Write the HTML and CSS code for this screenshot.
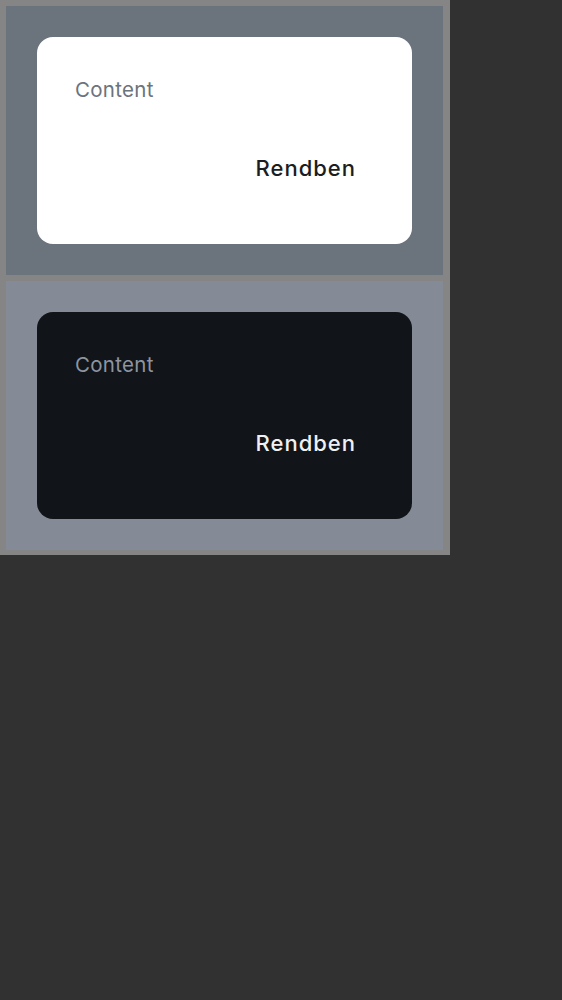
FILE: index.html
```html
<!DOCTYPE html>
<html>
<head>
<meta charset="utf-8">
<link rel="stylesheet" href="styles.css">
</head>
<body>
<div class="frame">
  <div class="panel panel-light">
    <div class="card card-light">
      <div class="content">Content</div>
      <div class="actions"><span class="btn">Rendben</span></div>
    </div>
  </div>
  <div class="panel panel-dark">
    <div class="card card-dark">
      <div class="content">Content</div>
      <div class="actions"><span class="btn">Rendben</span></div>
    </div>
  </div>
</div>
</body>
</html>
```

FILE: styles.css
```css
html, body {
  margin: 0;
  padding: 0;
  background: #313131;
  font-family: Inter, Roboto, "Noto Sans", sans-serif;
}
.frame {
  width: 437px;
  background: #858585;
  padding: 6px 7px 5px 6px;
  display: flex;
  flex-direction: column;
  gap: 6px;
}
.panel {
  height: 269px;
  box-sizing: border-box;
  padding: 31px;
}
.panel-light { background: #6b737d; }
.panel-dark { background: #858b96; }
.card {
  height: 207px;
  box-sizing: border-box;
  border-radius: 16px;
  padding: 0 56px 0 38px;
  display: flex;
  flex-direction: column;
}
.card-light { background: #ffffff; }
.card-dark { background: #111418; }
.content {
  font-size: 20.5px;
  line-height: 28px;
  margin-top: 39px;
  letter-spacing: 0.3px;
}
.card-light .content { color: #6b737d; }
.card-dark .content { color: #8e95a0; }
.actions {
  display: flex;
  justify-content: flex-end;
  margin-top: 50px;
}
.btn {
  font-size: 22px;
  font-weight: 500;
  line-height: 28px;
  letter-spacing: 1px;
}
.card-light .btn { color: #1b1d21; }
.card-dark .btn { color: #eef0f3; }
```
